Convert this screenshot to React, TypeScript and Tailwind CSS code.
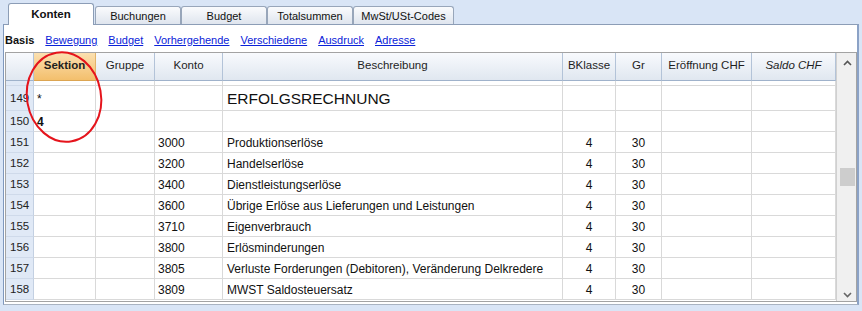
import React from "react";

const rows = [
  { n: "151", konto: "3000", desc: "Produktionserlöse" },
  { n: "152", konto: "3200", desc: "Handelserlöse" },
  { n: "153", konto: "3400", desc: "Dienstleistungserlöse" },
  { n: "154", konto: "3600", desc: "Übrige Erlöse aus Lieferungen und Leistungen" },
  { n: "155", konto: "3710", desc: "Eigenverbrauch" },
  { n: "156", konto: "3800", desc: "Erlösminderungen" },
  { n: "157", konto: "3805", desc: "Verluste Forderungen (Debitoren), Veränderung Delkredere" },
  { n: "158", konto: "3809", desc: "MWST Saldosteuersatz" },
];

const cell = "border-r border-b border-[#d9d9d9] flex items-center overflow-hidden whitespace-nowrap pt-[1px]";
const numCell = "border-r border-b border-r-[#c3d0e2] border-b-[#cfdaea] bg-[#e0e9f6] flex items-center pl-[4px] pt-[1px] text-[11.5px] text-[#222]";

function Row({ n, sek, sekBold, konto, desc, big, bk, gr, h }: { n: string; sek?: string; sekBold?: boolean; konto?: string; desc?: string; big?: boolean; bk?: string; gr?: string; h: string }) {
  return (
    <>
      <div className={`${numCell} ${h}`}>{n}</div>
      <div className={`${cell} ${h} pl-[3px] text-[12px] ${sekBold ? "font-bold" : ""}`}>{sek}</div>
      <div className={`${cell} ${h}`}></div>
      <div className={`${cell} ${h} pl-[3px] text-[12px]`}>{konto}</div>
      <div className={`${cell} ${h} pl-[4px] ${big ? "text-[15.5px]" : "text-[12px]"}`}>{desc}</div>
      <div className={`${cell} ${h} justify-center text-[12px]`}>{bk}</div>
      <div className={`${cell} ${h} justify-center text-[12px]`}>{gr}</div>
      <div className={`${cell} ${h}`}></div>
      <div className={`${cell} ${h}`}></div>
    </>
  );
}

export default function App() {
  const hdr = "h-[28px] border-r border-b border-r-[#b3c3d8] border-b-[#9fb2cb] bg-gradient-to-b from-[#f8fafd] to-[#e0e7f0] flex justify-center pt-[4px] text-[11.5px] text-[#1e1e1e]";
  return (
    <div className="w-[862px] h-[311px] bg-[#d9e5f6] relative overflow-hidden font-['Liberation_Sans',Arial,sans-serif] text-[#111]">
      {/* Tabs */}
      <div className="flex items-end h-[24px] pl-[8px] relative z-10">
        <div className="w-[86px] h-[22px] mb-[-1px] mr-[1px] bg-white border border-b-0 border-[#8c9db6] rounded-t-[3px] flex justify-center items-center font-bold text-[11.5px] text-[#111]">
          Konten
        </div>
        {[
          ["Buchungen", "w-[86px]"],
          ["Budget", "w-[86px]"],
          ["Totalsummen", "w-[86px]"],
          ["MwSt/USt-Codes", "w-[101px]"],
        ].map(([t, w]) => (
          <div
            key={t}
            className={`${w} h-[18px] bg-gradient-to-b from-[#fafbfd] to-[#dfe5ee] border border-b-0 border-[#98a6ba] rounded-t-[3px] flex justify-center items-center text-[11px] text-[#111] pt-[1px]`}
          >
            {t}
          </div>
        ))}
      </div>

      {/* Panel */}
      <div className="ml-[3px] w-[856px] h-[281px] bg-white border-t border-l border-b border-r-2 border-t-[#8c9db6] border-l-[#7f98bd] border-b-[#a9b3c1] border-r-[#8ba2c6]">
        {/* Sub nav */}
        <div className="h-[27px] flex items-center pl-[1px] pt-[3px] text-[11px] gap-[11px]">
          <span className="font-bold text-[#111]">Basis</span>
          {["Bewegung", "Budget", "Vorhergehende", "Verschiedene", "Ausdruck", "Adresse"].map((l) => (
            <span key={l} className="underline text-[#0a22d8]">
              {l}
            </span>
          ))}
        </div>

        {/* Grid */}
        <div className="ml-[1px] w-[852px] h-[250px] border border-[#a3a3a3] flex">
          <div className="grid grid-cols-[28px_62px_59px_68px_340px_53px_46px_90px_84px] content-start">
            {/* header */}
            <div className={`${hdr} bg-gradient-to-b from-[#eef3fa] to-[#dbe5f2]`}></div>
            <div className="h-[28px] border-r border-b border-r-[#e3b46a] border-b-[#dca552] bg-gradient-to-b from-[#fbe0b0] to-[#f3bf6c] flex justify-center pt-[4px] text-[11.5px] font-bold text-[#1e1e1e]">
              Sektion
            </div>
            <div className={hdr}>Gruppe</div>
            <div className={hdr}>Konto</div>
            <div className={hdr}>Beschreibung</div>
            <div className={hdr}>BKlasse</div>
            <div className={hdr}>Gr</div>
            <div className={hdr}>Eröffnung CHF</div>
            <div className={`${hdr} italic`}>Saldo CHF</div>

            {/* partial row */}
            <Row n="" h="h-[5px]" />
            <Row n="149" sek="*" desc="ERFOLGSRECHNUNG" big h="h-[25px]" />
            <Row n="150" sek="4" sekBold h="h-[21px]" />
            {rows.map((r) => (
              <Row key={r.n} n={r.n} konto={r.konto} desc={r.desc} bk="4" gr="30" h="h-[21px]" />
            ))}
          </div>
          {/* Scrollbar */}
          <div className="flex-1 bg-[#f0f0f0] border-l border-[#d0d0d0] relative">
            <svg className="absolute left-[6px] top-[7px]" width="9" height="6" viewBox="0 0 9 6">
              <path d="M1 5 L4.5 1.5 L8 5" stroke="#555" strokeWidth="1.6" fill="none" />
            </svg>
            <div className="absolute left-[3px] top-[115px] w-[15px] h-[18px] bg-[#cdcdcd]"></div>
            <svg className="absolute left-[6px] top-[239px]" width="9" height="6" viewBox="0 0 9 6">
              <path d="M1 1 L4.5 4.5 L8 1" stroke="#666" strokeWidth="1.6" fill="none" />
            </svg>
          </div>
        </div>
      </div>

      {/* Red circle annotation */}
      <svg className="absolute left-0 top-0 pointer-events-none z-20" width="862" height="311">
        <ellipse cx="64" cy="97" rx="37" ry="45" transform="rotate(-10 64 97)" stroke="#e5141c" strokeWidth="2" fill="none" />
      </svg>
    </div>
  );
}
